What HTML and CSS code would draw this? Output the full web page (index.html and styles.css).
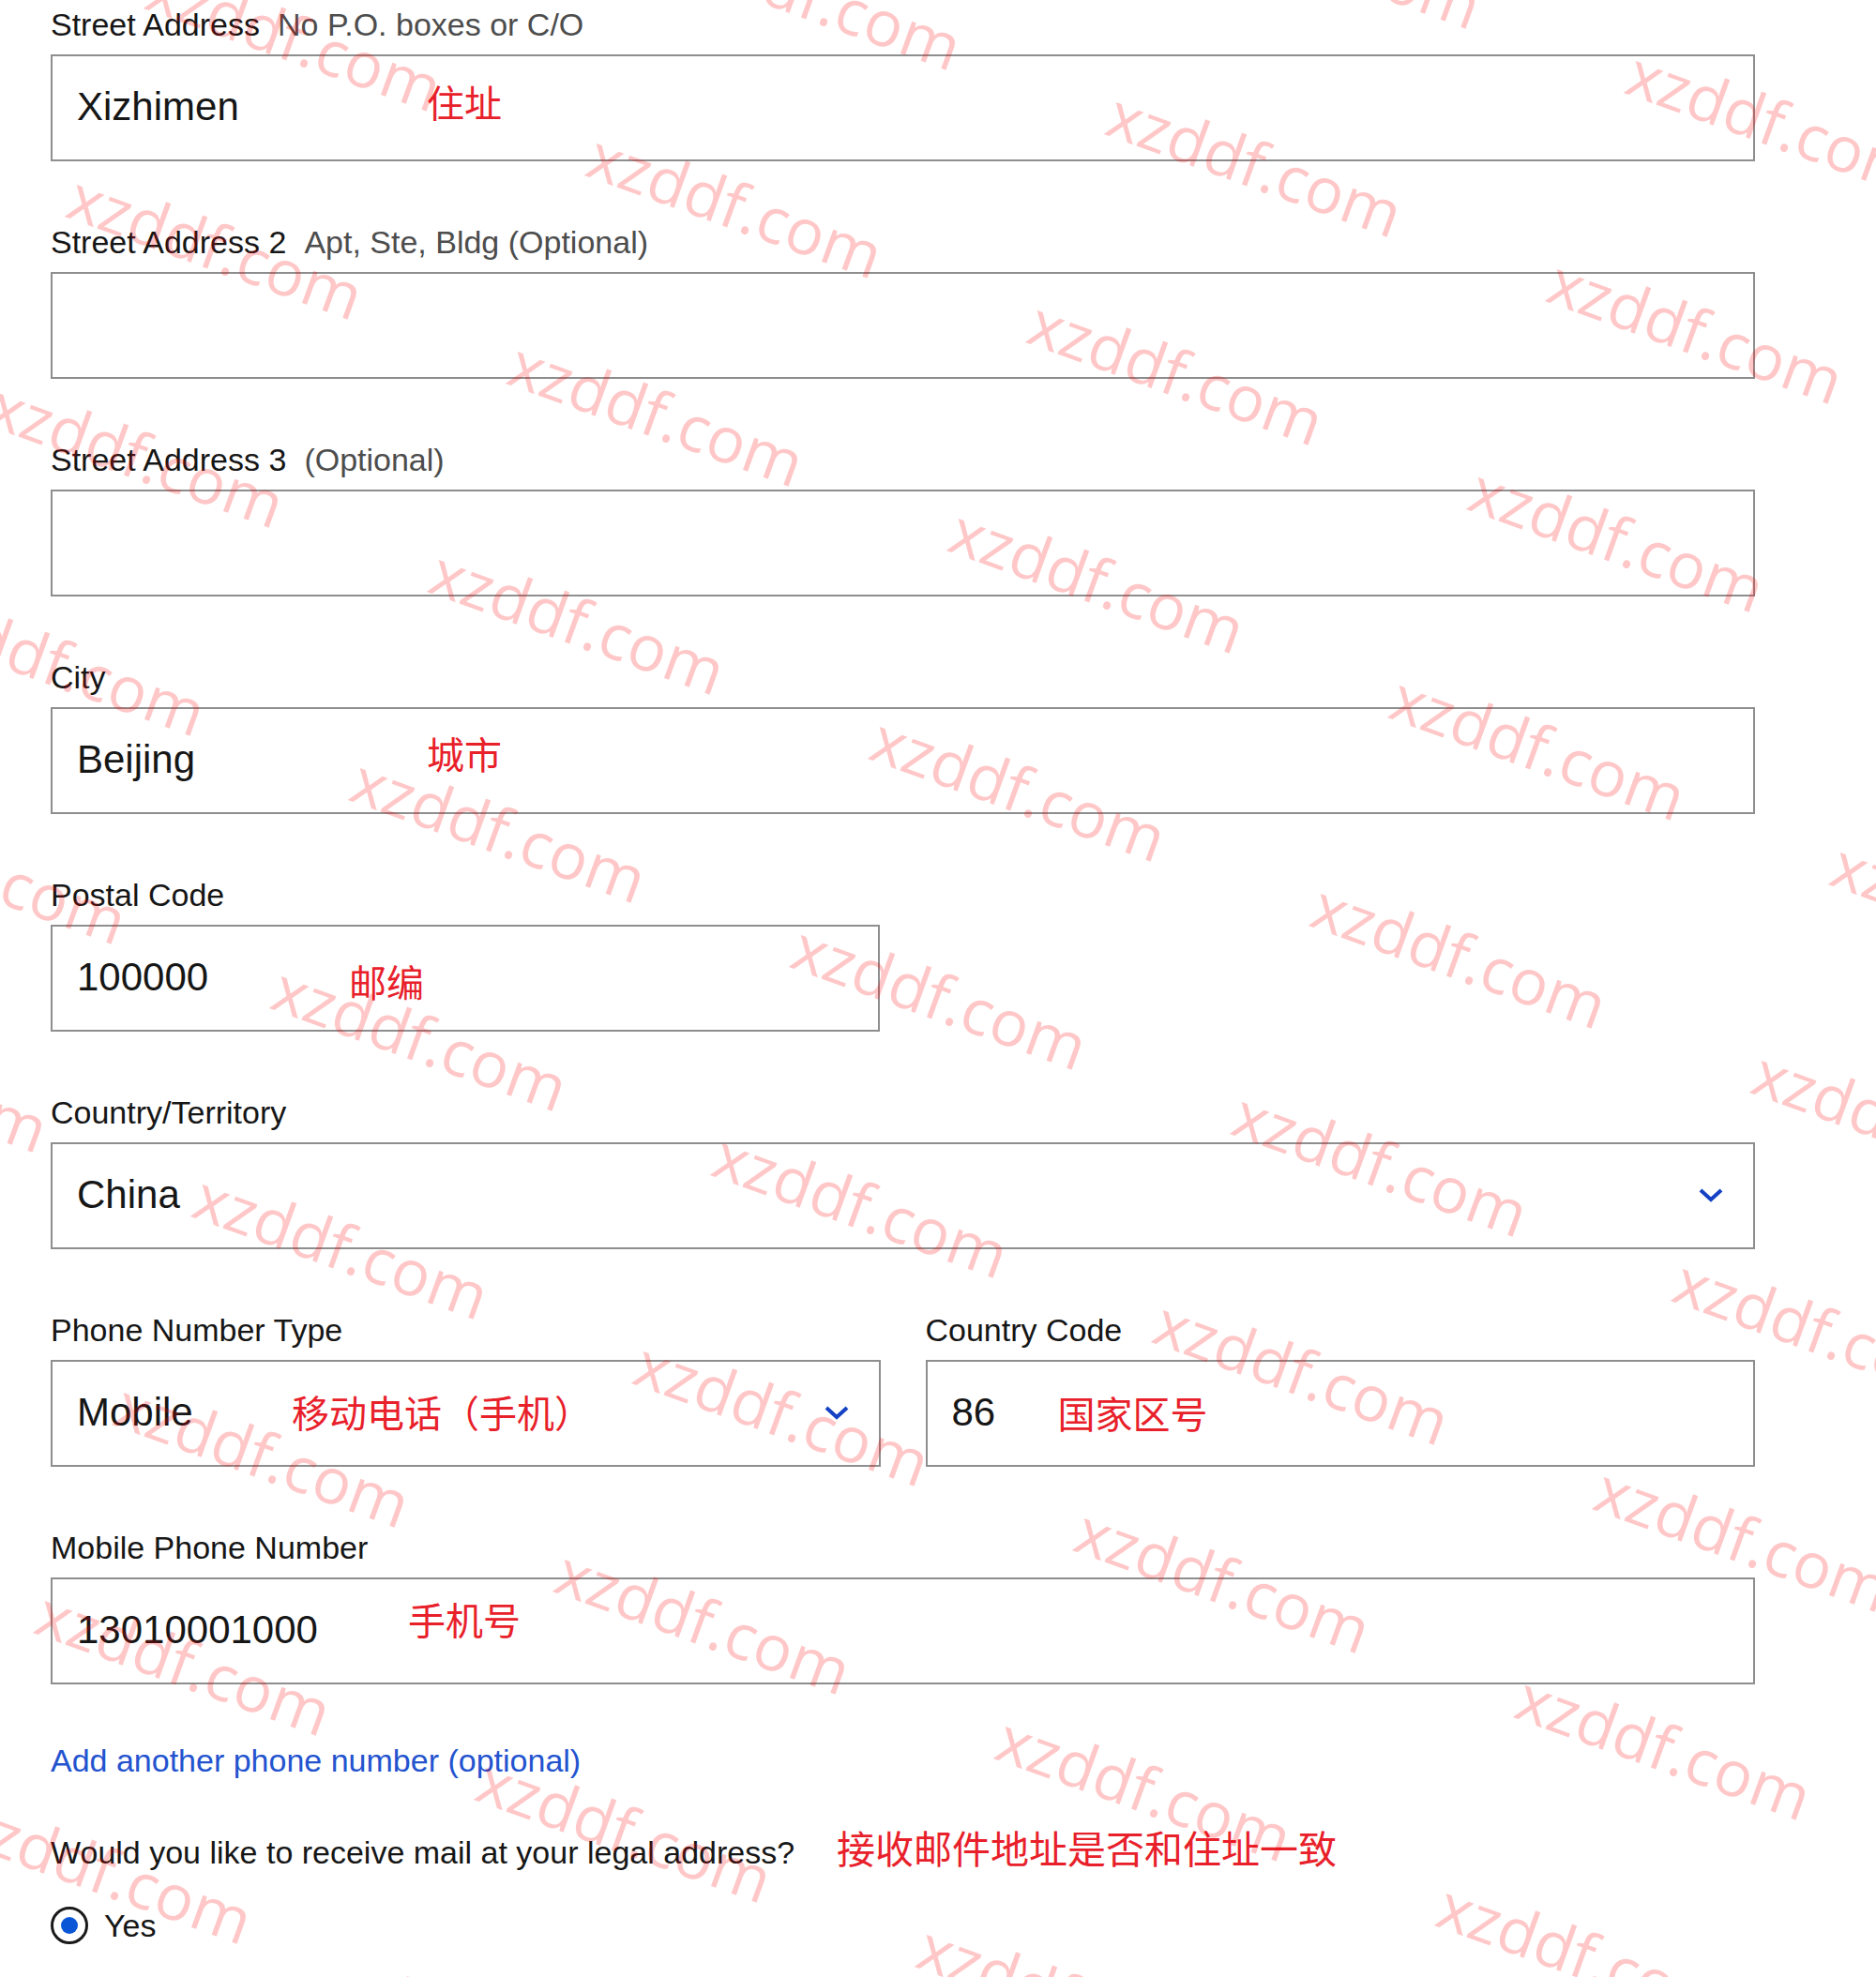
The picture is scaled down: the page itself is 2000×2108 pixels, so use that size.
FILE: index.html
```html
<!DOCTYPE html>
<html lang="en">
<head>
    <meta charset="UTF-8">
    <meta name="viewport" content="width=device-width, initial-scale=1.0">
    <title>Legal Address</title>
    <link rel="stylesheet" href="styles.css">
</head>
<body>
    <form class="address-form">
        <div class="fields">
            <div class="field">
                <label class="label">Street Address<span class="hint">No P.O. boxes or C/O</span></label>
                <div class="input">
                    <span class="value">Xizhimen</span>
                    <span class="note note-street">住址</span>
                </div>
            </div>
            <div class="field">
                <label class="label">Street Address 2<span class="hint">Apt, Ste, Bldg (Optional)</span></label>
                <div class="input"></div>
            </div>
            <div class="field">
                <label class="label">Street Address 3<span class="hint">(Optional)</span></label>
                <div class="input"></div>
            </div>
            <div class="field">
                <label class="label">City</label>
                <div class="input">
                    <span class="value">Beijing</span>
                    <span class="note note-city">城市</span>
                </div>
            </div>
            <div class="field half">
                <label class="label">Postal Code</label>
                <div class="input">
                    <span class="value">100000</span>
                    <span class="note note-postal">邮编</span>
                </div>
            </div>
            <div class="field">
                <label class="label">Country/Territory</label>
                <div class="input select">
                    <span class="value">China</span>
                    <svg class="chevron" viewBox="0 0 28 16"><polyline points="3,3 14,13 25,3"/></svg>
                </div>
            </div>
            <div class="field-row">
                <div class="field">
                    <label class="label">Phone Number Type</label>
                    <div class="input select">
                        <span class="value">Mobile</span>
                        <span class="note note-type">移动电话（手机）</span>
                        <svg class="chevron" viewBox="0 0 28 16"><polyline points="3,3 14,13 25,3"/></svg>
                    </div>
                </div>
                <div class="field">
                    <label class="label">Country Code</label>
                    <div class="input">
                        <span class="value">86</span>
                        <span class="note note-code">国家区号</span>
                    </div>
                </div>
            </div>
            <div class="field">
                <label class="label">Mobile Phone Number</label>
                <div class="input">
                    <span class="value">13010001000</span>
                    <span class="note note-mobile">手机号</span>
                </div>
            </div>
        </div>

        <a class="more-link" href="#">Add another phone number (optional)</a>

        <div class="question">
            <span>Would you like to receive mail at your legal address?</span>
            <span class="question-note">接收邮件地址是否和住址一致</span>
        </div>

        <label class="radio">
            <span class="radio-dot"></span>
            <span>Yes</span>
        </label>
    </form>

    <div class="watermark" id="watermark"></div>

    <script>
        // tile the site watermark across the page
        const layer = document.getElementById('watermark');
        for (let j = -2; j < 12; j++) {
            for (let i = -3; i < 6; i++) {
                const x = 1196 + i * 554 - j * 84;
                const y = 86 - i * 44 + j * 222;
                if (x < -420 || x > 2000 || y < -160 || y > 2140) continue;
                const mark = document.createElement('span');
                mark.className = 'mark';
                mark.textContent = 'xzddf.com';
                mark.style.left = x + 'px';
                mark.style.top = y + 'px';
                layer.appendChild(mark);
            }
        }
    </script>
</body>
</html>
```

FILE: styles.css
```css
body {
    margin: 0;
    background: #fff;
    color: #161616;
    font-family: "Liberation Sans", Arial, sans-serif;
}
.address-form {
    width: 1817px;
    padding: 6px 0 0 54px;
}
.fields {
    display: flex;
    flex-direction: column;
    gap: 66px;
}
.field-row {
    display: grid;
    grid-template-columns: 1fr 1fr;
    column-gap: 48px;
}
.half {
    width: 884px;
}
.label {
    display: block;
    font-size: 34px;
    line-height: 40px;
    margin-bottom: 12px;
}
.hint {
    color: #4d4d4d;
    margin-left: 19px;
}
.input {
    position: relative;
    display: flex;
    align-items: center;
    box-sizing: border-box;
    height: 114px;
    padding: 0 31px 3px 26px;
    border: 2px solid #8e8e8e;
    font-size: 42px;
    line-height: 48px;
}
.chevron {
    width: 28px;
    height: 16px;
    margin-left: auto;
    fill: none;
    stroke: #1541c4;
    stroke-width: 4;
}
.note {
    position: absolute;
    font-family: "Noto Sans CJK SC", sans-serif;
    font-size: 40px;
    line-height: 1;
    color: #e8202a;
    white-space: nowrap;
}
.note-street { left: 399px; top: 28px; }
.note-city { left: 399px; top: 27px; }
.note-postal { left: 316px; top: 38px; }
.note-type { left: 255px; top: 33px; }
.note-code { left: 139px; top: 34px; }
.note-mobile { left: 379px; top: 22px; }
.more-link {
    display: block;
    margin-top: 61px;
    font-size: 34px;
    line-height: 40px;
    color: #2353cf;
    text-decoration: none;
}
.question {
    display: flex;
    align-items: baseline;
    margin-top: 50px;
    font-size: 34px;
    line-height: 44px;
}
.question-note {
    margin-left: 45px;
    font-family: "Noto Sans CJK SC", sans-serif;
    font-size: 41px;
    color: #e8202a;
}
.radio {
    display: flex;
    align-items: center;
    gap: 17px;
    margin-top: 36px;
    font-size: 34px;
    line-height: 40px;
}
.radio-dot {
    display: flex;
    align-items: center;
    justify-content: center;
    box-sizing: border-box;
    width: 40px;
    height: 40px;
    border: 3px solid #1a1a1a;
    border-radius: 50%;
}
.radio-dot::after {
    content: "";
    width: 18px;
    height: 18px;
    border-radius: 50%;
    background: #0a56d6;
}
.watermark {
    position: fixed;
    inset: 0;
    overflow: hidden;
    pointer-events: none;
}
.mark {
    position: absolute;
    font-family: "Open Sans", sans-serif;
    font-size: 68px;
    line-height: 1;
    color: rgba(255, 0, 0, 0.22);
    white-space: nowrap;
    transform: rotate(20deg);
    transform-origin: 0 0;
}
```
